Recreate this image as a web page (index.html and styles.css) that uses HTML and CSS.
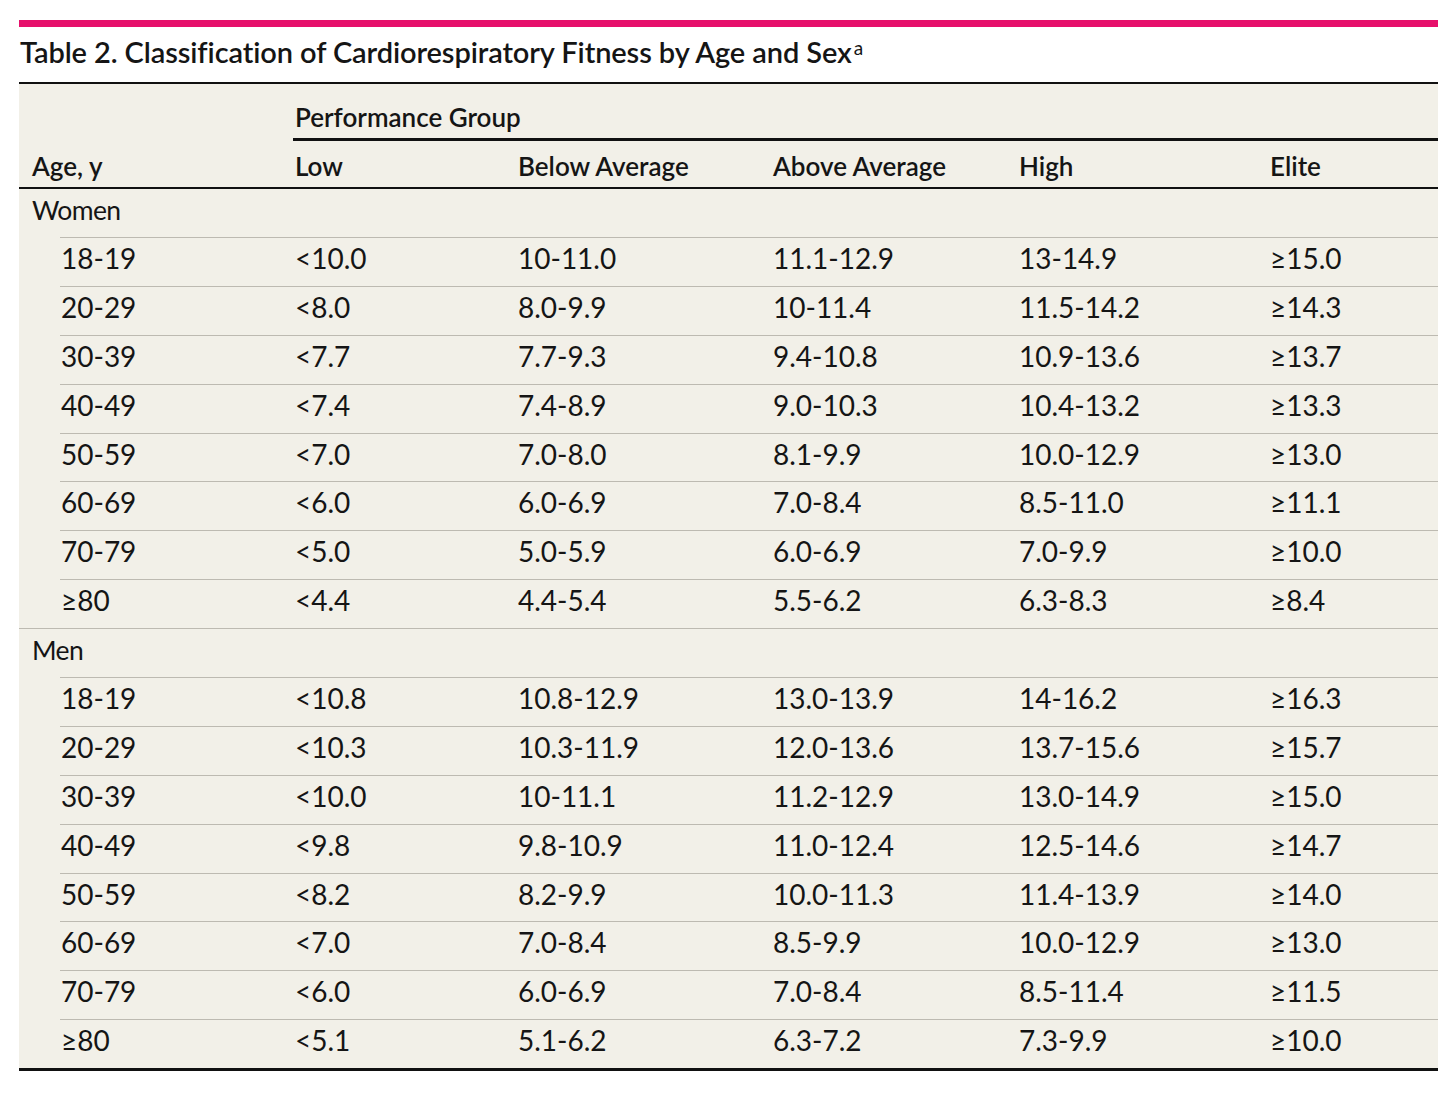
FILE: index.html
```html
<!DOCTYPE html>
<html lang="en">
<head>
<meta charset="utf-8">
<title>Table 2. Classification of Cardiorespiratory Fitness by Age and Sex</title>
<link rel="stylesheet" href="styles.css">
</head>
<body>
<div class="page">
  <div class="rule-top"></div>
  <h1 class="title">Table 2. Classification of Cardiorespiratory Fitness by Age and Sex<sup class="note">a</sup></h1>
  <div class="table" role="table">
    <div class="head">
      <div class="head-top">
        <div class="group-label">Performance Group</div>
      </div>
      <div class="grid head-cols" role="row">
        <div class="c-first">Age, y</div>
        <div>Low</div>
        <div>Below Average</div>
        <div>Above Average</div>
        <div>High</div>
        <div>Elite</div>
      </div>
    </div>

    <div class="section">
      <div class="label-row">Women</div>
      <div class="grid row" role="row"><div>18-19</div><div>&lt;10.0</div><div>10-11.0</div><div>11.1-12.9</div><div>13-14.9</div><div>≥15.0</div></div>
      <div class="grid row" role="row"><div>20-29</div><div>&lt;8.0</div><div>8.0-9.9</div><div>10-11.4</div><div>11.5-14.2</div><div>≥14.3</div></div>
      <div class="grid row" role="row"><div>30-39</div><div>&lt;7.7</div><div>7.7-9.3</div><div>9.4-10.8</div><div>10.9-13.6</div><div>≥13.7</div></div>
      <div class="grid row" role="row"><div>40-49</div><div>&lt;7.4</div><div>7.4-8.9</div><div>9.0-10.3</div><div>10.4-13.2</div><div>≥13.3</div></div>
      <div class="grid row" role="row"><div>50-59</div><div>&lt;7.0</div><div>7.0-8.0</div><div>8.1-9.9</div><div>10.0-12.9</div><div>≥13.0</div></div>
      <div class="grid row" role="row"><div>60-69</div><div>&lt;6.0</div><div>6.0-6.9</div><div>7.0-8.4</div><div>8.5-11.0</div><div>≥11.1</div></div>
      <div class="grid row" role="row"><div>70-79</div><div>&lt;5.0</div><div>5.0-5.9</div><div>6.0-6.9</div><div>7.0-9.9</div><div>≥10.0</div></div>
      <div class="grid row" role="row"><div>≥80</div><div>&lt;4.4</div><div>4.4-5.4</div><div>5.5-6.2</div><div>6.3-8.3</div><div>≥8.4</div></div>
    </div>

    <div class="section">
      <div class="label-row">Men</div>
      <div class="grid row" role="row"><div>18-19</div><div>&lt;10.8</div><div>10.8-12.9</div><div>13.0-13.9</div><div>14-16.2</div><div>≥16.3</div></div>
      <div class="grid row" role="row"><div>20-29</div><div>&lt;10.3</div><div>10.3-11.9</div><div>12.0-13.6</div><div>13.7-15.6</div><div>≥15.7</div></div>
      <div class="grid row" role="row"><div>30-39</div><div>&lt;10.0</div><div>10-11.1</div><div>11.2-12.9</div><div>13.0-14.9</div><div>≥15.0</div></div>
      <div class="grid row" role="row"><div>40-49</div><div>&lt;9.8</div><div>9.8-10.9</div><div>11.0-12.4</div><div>12.5-14.6</div><div>≥14.7</div></div>
      <div class="grid row" role="row"><div>50-59</div><div>&lt;8.2</div><div>8.2-9.9</div><div>10.0-11.3</div><div>11.4-13.9</div><div>≥14.0</div></div>
      <div class="grid row" role="row"><div>60-69</div><div>&lt;7.0</div><div>7.0-8.4</div><div>8.5-9.9</div><div>10.0-12.9</div><div>≥13.0</div></div>
      <div class="grid row" role="row"><div>70-79</div><div>&lt;6.0</div><div>6.0-6.9</div><div>7.0-8.4</div><div>8.5-11.4</div><div>≥11.5</div></div>
      <div class="grid row" role="row"><div>≥80</div><div>&lt;5.1</div><div>5.1-6.2</div><div>6.3-7.2</div><div>7.3-9.9</div><div>≥10.0</div></div>
    </div>
  </div>
</div>
</body>
</html>
```

FILE: styles.css
```css
body {
  margin: 0;
  background: #ffffff;
  color: #151515;
  font-family: Lato, "Liberation Sans", sans-serif;
}

.page {
  margin: 20px 0 0 19px;
  width: 1419px;
}

.rule-top {
  height: 7px;
  background: #e6106b;
}

.title {
  margin: 0;
  padding: 5px 0 10px 1px;
  font-size: 29px;
  font-weight: 600;
  line-height: 40px;
  letter-spacing: -0.1px;
  white-space: nowrap;
}

.note {
  font-size: 19px;
  font-weight: 400;
  line-height: 0;
  vertical-align: 8px;
  margin-left: 2px;
}

.table {
  background: #f2f0e8;
  border-top: 2px solid #111;
  border-bottom: 3px solid #111;
}

.grid {
  display: grid;
  grid-template-columns: 276px 223px 255px 246px 251px 168px;
}

.head-top {
  display: grid;
  grid-template-columns: 274px 1fr;
}

.group-label {
  grid-column: 2;
  padding: 18px 0 6px 2px;
  border-bottom: 3px solid #111;
  font-size: 26px;
  font-weight: 600;
  line-height: 30px;
}

.head-cols {
  padding: 10px 0 6px;
  border-bottom: 2px solid #111;
  font-size: 26px;
  font-weight: 600;
  line-height: 30px;
}

.head-cols .c-first {
  padding-left: 13px;
}

.label-row {
  height: 48px;
  padding-left: 13px;
  font-size: 26.5px;
  letter-spacing: -0.6px;
  line-height: 42px;
}

.section + .section {
  border-top: 1px solid #bdbab1;
}

.row {
  margin-left: 41px;
  height: 47.875px;
  border-top: 1px solid #bdbab1;
  grid-template-columns: 235px 223px 255px 246px 251px 168px;
  font-size: 28px;
  line-height: 41px;
}

.row > div:first-child {
  padding-left: 1px;
}
```
